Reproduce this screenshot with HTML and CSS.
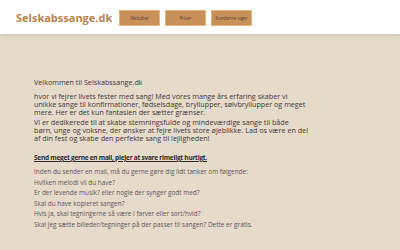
FILE: index.html
```html
<!DOCTYPE html>
<html lang="da">
<head>
    <meta charset="UTF-8">
    <meta name="viewport" content="width=device-width, initial-scale=1.0">
    <title>Selskabssange.dk</title>
    <link rel="stylesheet" href="styles.css">
</head>
<body>
    <header class="topbar">
        <div class="logo">Selskabssange.dk</div>
        <nav class="menu">
            <a class="menu-btn" href="#">Melodier</a>
            <a class="menu-btn" href="#">Priser</a>
            <a class="menu-btn" href="#">Kunderne siger</a>
        </nav>
    </header>

    <main class="content">
        <p class="intro">Velkommen til Selskabssange.dk</p>
        <p>hvor vi fejrer livets fester med sang! Med vores mange års erfaring skaber vi unikke sange til konfirmationer, fødselsdage, bryllupper, sølvbryllupper og meget mere. Her er det kun fantasien der sætter grænser.</p>
        <p>Vi er dedikerede til at skabe stemningsfulde og mindeværdige sange til både<br>børn, unge og voksne, der ønsker at fejre livets store øjeblikke. Lad os være en del af din fest og skabe den perfekte sang til lejligheden!</p>

        <h2 class="mail-head">Send meget gerne en mail, plejer at svare rimeligt hurtigt.</h2>

        <ul class="questions">
            <li>Inden du sender en mail, må du gerne gøre dig lidt tanker om følgende:</li>
            <li>Hvilken melodi vil du have?</li>
            <li>Er der levende musik? eller nogle der synger godt med?</li>
            <li>Skal du have kopieret sangen?</li>
            <li>Hvis ja, skal tegningerne så være i farver eller sort/hvid?</li>
            <li>Skal jeg sætte billeder/tegninger på der passer til sangen? Dette er gratis.</li>
        </ul>
    </main>
</body>
</html>
```

FILE: styles.css
```css
body {
    margin: 0;
    background-color: #e6dacb;
    font-family: "Open Sans", sans-serif;
    color: #3f3838;
}
.topbar {
    background-color: #ffffff;
    height: 34px;
    display: flex;
    align-items: center;
    padding: 0 16px;
    box-shadow: 0 2px 4px rgba(120, 100, 80, 0.15);
}
.logo {
    color: #b9834c;
    font-weight: bold;
    font-size: 11px;
    width: 103px;
    white-space: nowrap;
}
.menu { display: flex; gap: 5px; }
.menu-btn {
    display: block;
    width: 39px;
    height: 14px;
    line-height: 14px;
    background-color: #c8915a;
    border: 1px solid #e8b27a;
    color: #5b4030;
    font-size: 4.5px;
    text-align: center;
    text-decoration: none;
    margin-top: 2px;
}
.content {
    padding: 44px 34px 0;
    width: 275px;
    font-size: 7.2px;
    line-height: 8px;
}
.content p { margin: 0 0 2px; }
.content .intro { margin-bottom: 6px; }
.mail-head {
    font-size: 6.5px;
    font-weight: bold;
    letter-spacing: -0.25px;
    color: #2f2828;
    text-decoration: underline;
    margin: 12px 0 6px;
}
.questions {
    list-style: none;
    margin: 0;
    padding: 0;
    font-size: 6.45px;
    color: #5e5656;
}
.questions li { margin-bottom: 2.6px; }
```
